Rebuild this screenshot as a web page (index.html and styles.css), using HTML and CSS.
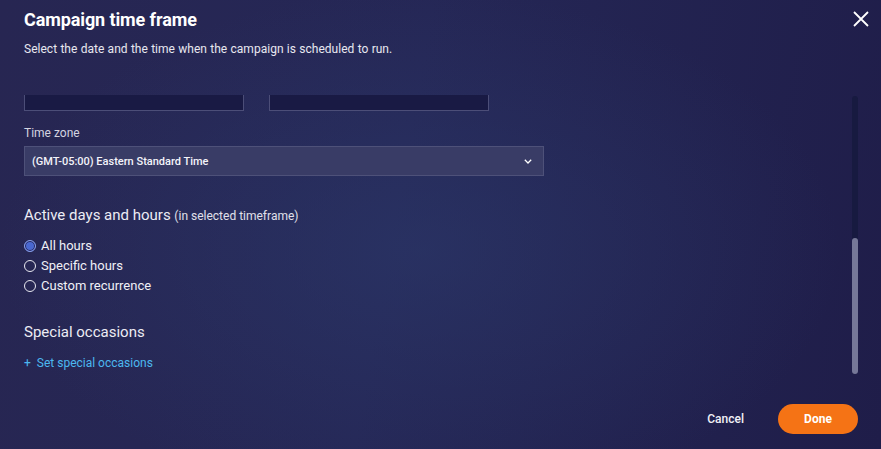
FILE: index.html
```html
<!DOCTYPE html>
<html>
<head>
<meta charset="utf-8">
<link rel="stylesheet" href="styles.css">
</head>
<body>
<div class="dialog">
  <header class="head">
    <div class="head-text">
      <h1 class="title">Campaign time frame</h1>
      <p class="subtitle">Select the date and the time when the campaign is scheduled to run.</p>
    </div>
    <button class="close" aria-label="Close">
      <svg width="16" height="16" viewBox="0 0 16 16"><path d="M1 1L15 15M15 1L1 15" stroke="#fff" stroke-width="1.8" fill="none"/></svg>
    </button>
  </header>
  <div class="body">
    <div class="scroll">
      <div class="content">
        <div class="inputs">
          <div class="input"></div>
          <div class="input"></div>
        </div>
        <label class="field-label">Time zone</label>
        <div class="select">
          <span>(GMT-05:00) Eastern Standard Time</span>
          <svg width="8" height="5" viewBox="0 0 8 5"><path d="M0.8 0.8L4 4L7.2 0.8" stroke="#fff" stroke-width="1.3" fill="none"/></svg>
        </div>
        <h2 class="section">Active days and hours <small>(in selected timeframe)</small></h2>
        <div class="radios">
          <div class="radio checked"><span class="dot"></span>All hours</div>
          <div class="radio"><span class="dot"></span>Specific hours</div>
          <div class="radio"><span class="dot"></span>Custom recurrence</div>
        </div>
        <h2 class="section special">Special occasions</h2>
        <a class="link"><span class="plus">+</span>Set special occasions</a>
      </div>
    </div>
    <div class="scrollbar"><div class="thumb"></div></div>
  </div>
  <footer class="foot">
    <button class="cancel">Cancel</button>
    <button class="done">Done</button>
  </footer>
</div>
</body>
</html>
```

FILE: styles.css
```css
* { box-sizing: border-box; }
html, body { margin: 0; padding: 0; }
body {
  width: 881px;
  height: 449px;
  overflow: hidden;
  font-family: Roboto, "Liberation Sans", sans-serif;
  color: #fff;
  background: #232250;
}
.dialog {
  width: 881px;
  height: 449px;
  display: flex;
  flex-direction: column;
  background:
    radial-gradient(ellipse 420px 260px at 420px 250px, rgba(44, 58, 108, 0.55), rgba(44, 58, 108, 0) 100%),
    linear-gradient(100deg, #272652 0%, #252756 45%, #1f1d49 100%);
}
.head {
  display: flex;
  justify-content: space-between;
  align-items: flex-start;
  padding: 9px 12px 0 24px;
  height: 95px;
}
.title {
  margin: 0;
  font-size: 18px;
  font-weight: 700;
  line-height: 22px;
  letter-spacing: -0.1px;
}
.subtitle {
  margin: 11px 0 0;
  font-size: 12px;
  line-height: 14px;
  color: #e8e8f0;
  letter-spacing: 0.02px;
  word-spacing: 0.3px;
}
.close {
  background: none;
  border: 0;
  padding: 0;
  margin-top: 2px;
  width: 16px;
  height: 16px;
  cursor: pointer;
  display: block;
}
.close svg { display: block; }
.body {
  display: flex;
  height: 280px;
}
.scroll {
  flex: 1;
  overflow: hidden;
}
.content {
  padding-left: 24px;
  margin-top: -14px;
}
.inputs {
  display: flex;
  gap: 25px;
}
.input {
  width: 220px;
  height: 30px;
  background: #191a44;
  border: 1px solid #4c4e78;
}
.field-label {
  display: block;
  margin-top: 15px;
  font-size: 12px;
  line-height: 14px;
  color: #d4d4e0;
}
.select {
  margin-top: 6px;
  width: 520px;
  height: 30px;
  background: #393c66;
  border: 1px solid #4e5179;
  display: flex;
  align-items: center;
  justify-content: space-between;
  padding: 0 11px 0 7px;
  font-size: 11px;
  font-weight: 500;
  color: #f4f4fa;
}
.select svg { display: block; }
.section {
  margin: 31px 0 0;
  font-size: 15px;
  font-weight: 400;
  line-height: 16px;
  color: #ececf4;
}
.section small {
  font-size: 12px;
  color: #e0e0ea;
}
.radios {
  margin-top: 14px;
  display: flex;
  flex-direction: column;
  gap: 5px;
}
.radio {
  display: flex;
  align-items: center;
  gap: 5px;
  font-size: 13px;
  line-height: 15px;
  color: #f0f0f6;
}
.dot {
  width: 12px;
  height: 12px;
  border-radius: 50%;
  border: 1px solid #e8e8f0;
  flex: none;
}
.radio.checked .dot {
  border-color: #8aa0e8;
  background: #4a68d0;
  box-shadow: inset 0 0 0 1px #24245a;
}
.special {
  margin-top: 30px;
  font-size: 15px;
  line-height: 18px;
}
.link {
  display: block;
  margin-top: 15px;
  font-size: 12px;
  line-height: 14px;
  color: #4cb8f0;
}
.plus { margin-right: 6px; }
.scrollbar {
  width: 6px;
  margin: 1px 23px 0 0;
  height: 278px;
  background: #171a40;
  border-radius: 3px;
  display: flex;
  flex-direction: column;
  justify-content: flex-end;
}
.thumb {
  height: 136px;
  background: #767898;
  border-radius: 3px;
}
.foot {
  display: flex;
  justify-content: flex-end;
  align-items: center;
  gap: 34px;
  padding: 29px 23px 0 0;
}
button { font-family: inherit; }
.cancel {
  background: none;
  border: 0;
  padding: 0;
  color: #f0f0f6;
  font-size: 12px;
  font-weight: 500;
}
.done {
  width: 80px;
  height: 30px;
  border: 0;
  border-radius: 15px;
  background: #f57315;
  color: #fff;
  font-size: 12px;
  font-weight: 700;
}
```
